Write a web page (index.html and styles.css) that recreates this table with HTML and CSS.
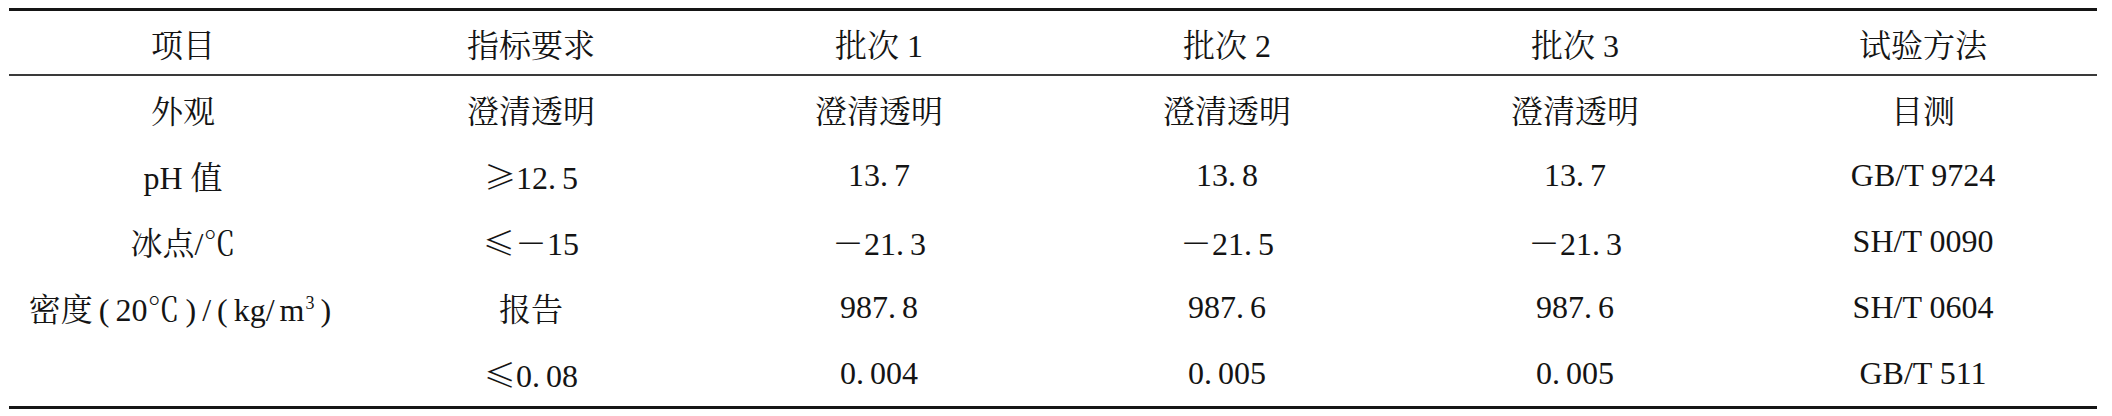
FILE: index.html
```html
<!DOCTYPE html>
<html lang="zh-CN">
<head>
<meta charset="utf-8">
<title>试验结果</title>
<link rel="stylesheet" href="styles.css">
</head>
<body>
<div class="wrap">
<table class="data">
<colgroup><col><col><col><col><col><col></colgroup>
<thead>
<tr><th>项目</th><th>指标要求</th><th>批次 1</th><th>批次 2</th><th>批次 3</th><th>试验方法</th></tr>
</thead>
<tbody>
<tr><td>外观</td><td>澄清透明</td><td>澄清透明</td><td>澄清透明</td><td>澄清透明</td><td>目测</td></tr>
<tr><td>pH 值</td><td><span class="sym">≥</span>12<span class="dot">.</span>5</td><td>13<span class="dot">.</span>7</td><td>13<span class="dot">.</span>8</td><td>13<span class="dot">.</span>7</td><td>GB/T 9724</td></tr>
<tr><td>冰点/℃</td><td><span class="sym">≤</span><span class="sym">－</span>15</td><td><span class="sym">－</span>21<span class="dot">.</span>3</td><td><span class="sym">－</span>21<span class="dot">.</span>5</td><td><span class="sym">－</span>21<span class="dot">.</span>3</td><td>SH/T 0090</td></tr>
<tr><td class="label">密度<span class="par">(</span>20℃<span class="par">)</span>/<span class="par">(</span>kg/<span class="gap"></span>m<sup>3</sup><span class="par">)</span></td><td>报告</td><td>987<span class="dot">.</span>8</td><td>987<span class="dot">.</span>6</td><td>987<span class="dot">.</span>6</td><td>SH/T 0604</td></tr>
<tr><td></td><td><span class="sym">≤</span>0<span class="dot">.</span>08</td><td>0<span class="dot">.</span>004</td><td>0<span class="dot">.</span>005</td><td>0<span class="dot">.</span>005</td><td>GB/T 511</td></tr>
</tbody>
</table>
</div>
</body>
</html>
```
FILE: styles.css
```css
html, body {
  margin: 0;
  padding: 0;
  background: #fff;
}
.wrap {
  padding: 8px 0 0 9px;
}
.data {
  width: 2088px;
  table-layout: fixed;
  border-collapse: collapse;
  border-top: 3px solid #151515;
  border-bottom: 3px solid #151515;
  font-family: "Liberation Serif", "Noto Serif CJK SC", "Source Han Serif SC", "AR PL UMing CN", "Noto Sans CJK SC", serif;
  font-size: 32px;
  color: #141414;
}
.data th {
  font-weight: normal;
  height: 63px;
  padding: 0;
  text-align: center;
  vertical-align: middle;
  border-bottom: 2px solid #3a3a3a;
}
.data td {
  height: 66px;
  padding: 0;
  text-align: center;
  vertical-align: middle;
}
.data .sym {
  font-family: "Noto Sans CJK SC", sans-serif;
  font-weight: 300;
}
.data .dot {
  display: inline-block;
  width: 14px;
  text-align: left;
}
.data .par {
  display: inline-block;
  margin: 0 6px;
}
.data .gap {
  display: inline-block;
  width: 5px;
}
.data sup {
  font-size: 18px;
  line-height: 0;
  vertical-align: 12px;
  margin-left: 1px;
}
```
